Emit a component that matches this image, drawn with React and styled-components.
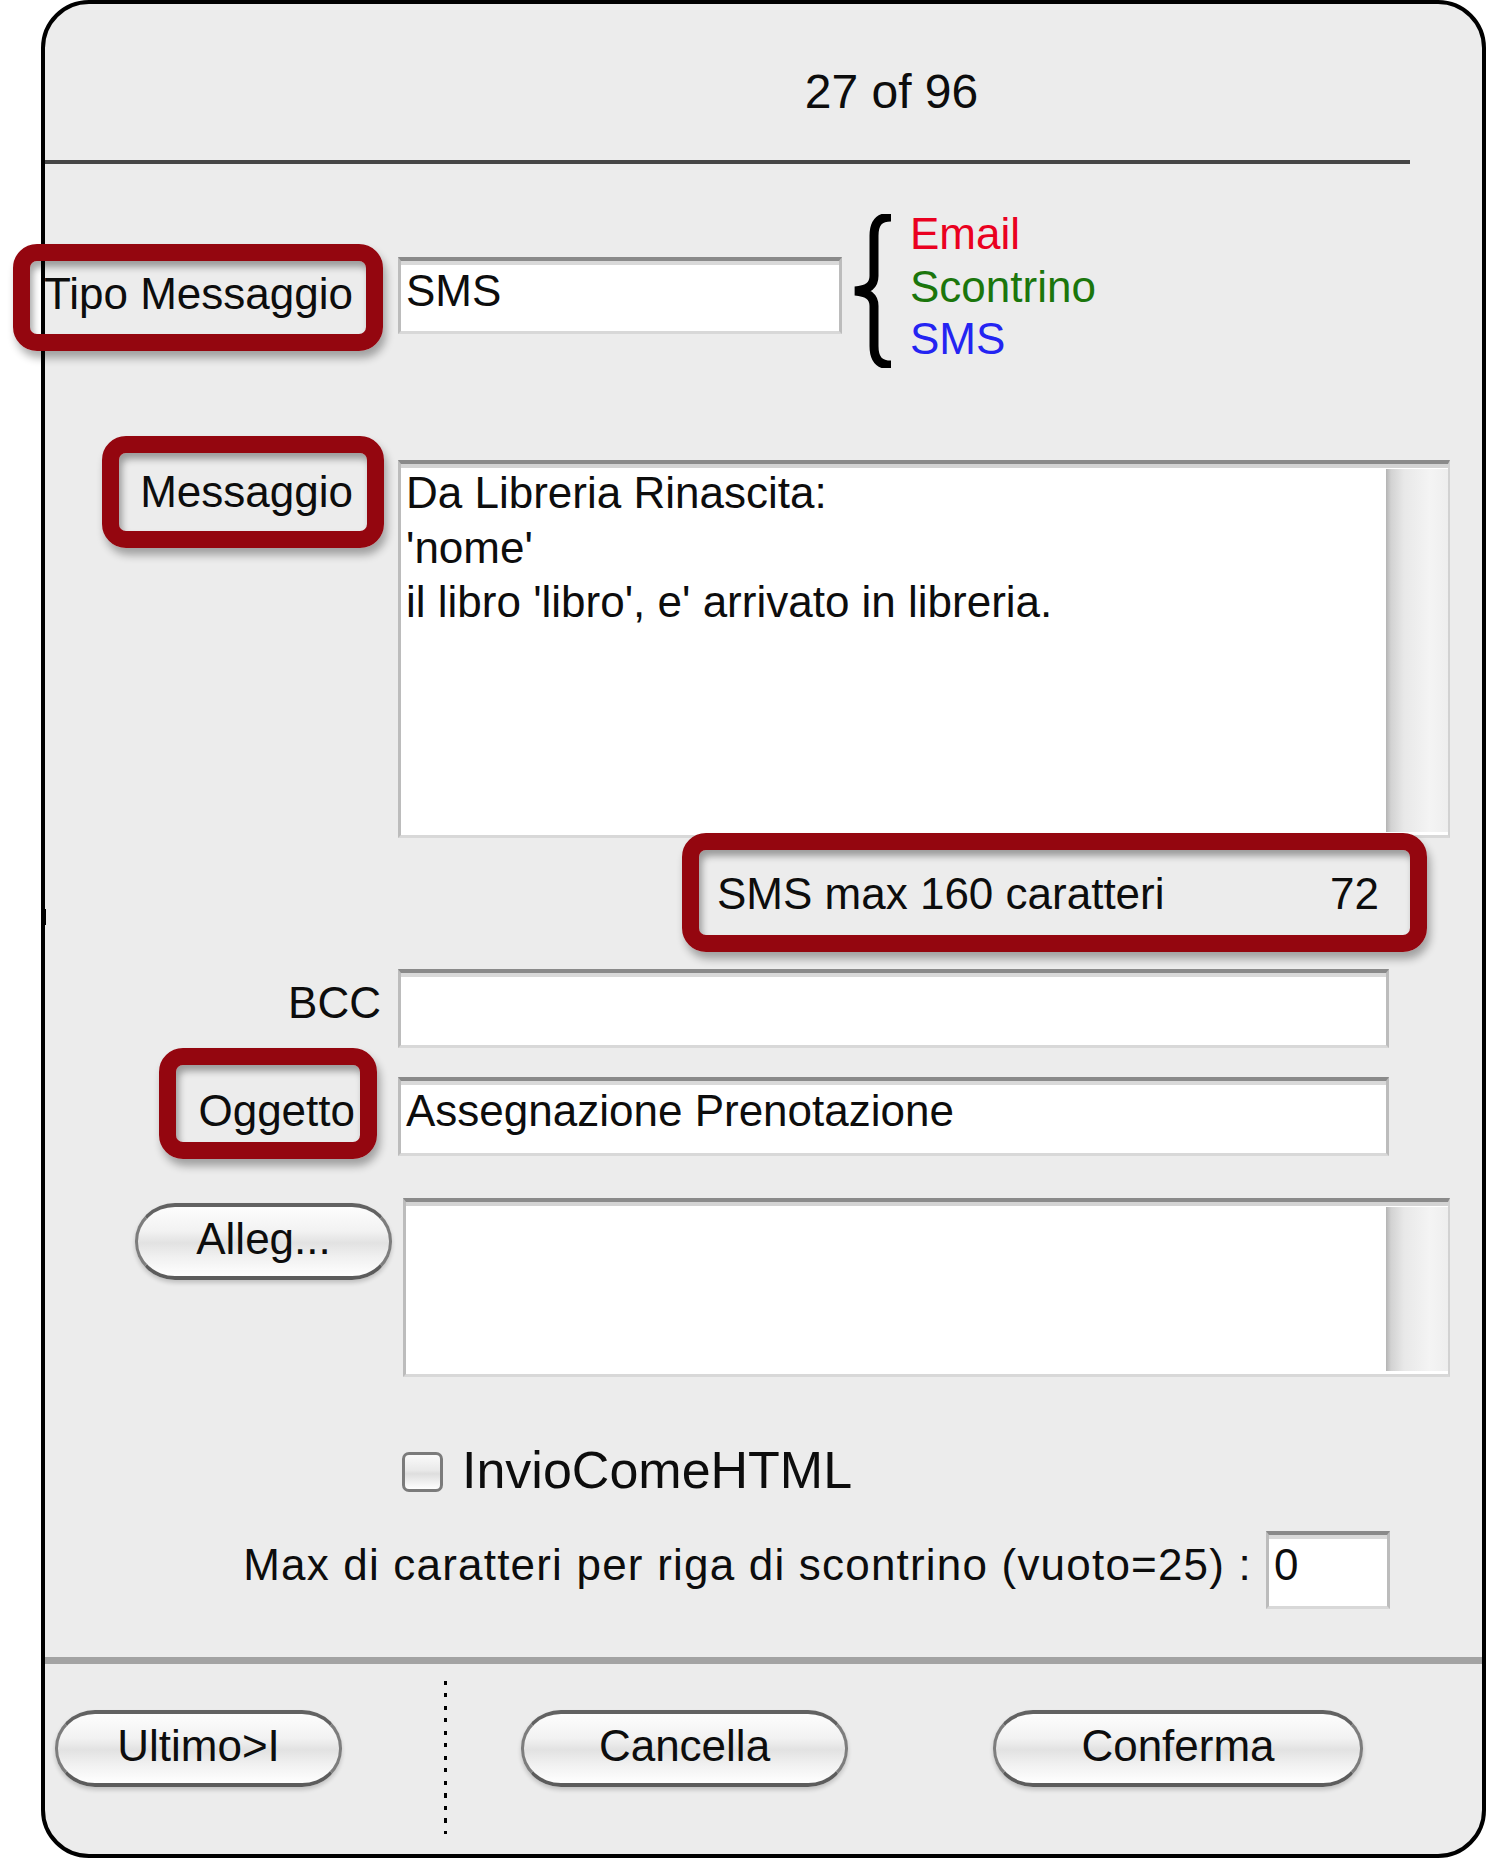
import React from 'react'
import styled, { createGlobalStyle } from 'styled-components'

const GlobalStyle = createGlobalStyle`
  html, body {
    margin: 0;
    padding: 0;
    background: #fff;
  }
  body {
    font-family: "Liberation Sans", Arial, sans-serif;
    color: #0d0d0d;
  }
`

// finestra con angoli arrotondati
const Panel = styled.div`
  box-sizing: border-box;
  width: 1445px;
  height: 1858px;
  margin-left: 41px;
  border: 4px solid #000;
  border-radius: 48px;
  background: #ececec;
  font-size: 44px;
  line-height: 52px;
  display: flex;
  flex-direction: column;
`
const Header = styled.div`
  padding: 62px 0 42px 256px;
  text-align: center;
  font-size: 48px;
  line-height: 52px;
`
const Divider = styled.div`
  height: 4px;
  background: #464646;
  margin-right: 72px;
`
const Row = styled.div`
  display: flex;
  align-items: flex-start;
  margin-top: ${(p) => p.$mt || 0}px;
`
const LabelCell = styled.div`
  box-sizing: border-box;
  flex: 0 0 353px;
  width: 353px;
  min-width: 0;
  display: flex;
  justify-content: flex-end;
  padding-right: ${(p) => p.$pr || 0}px;
  margin-top: ${(p) => p.$mt || 0}px;
  white-space: nowrap;
`
const Highlight = styled.div`
  flex-shrink: 0;
  box-sizing: border-box;
  width: ${(p) => p.$w}px;
  border: 17px solid #94060f;
  border-radius: 24px;
  padding: ${(p) => p.$pad};
  margin-left: ${(p) => p.$ml || 0};
  margin-right: ${(p) => p.$mr || 0}px;
  text-align: right;
  white-space: nowrap;
  box-shadow: 3px 7px 8px rgba(0, 0, 0, 0.32), inset 3px 6px 7px rgba(0, 0, 0, 0.35);
`
const Counter = styled(Highlight)`
  display: flex;
  justify-content: space-between;
`
const Field = styled.div`
  box-sizing: border-box;
  flex-shrink: 0;
  width: ${(p) => p.$w}px;
  height: ${(p) => p.$h}px;
  margin-top: ${(p) => p.$mt || 0}px;
  margin-left: ${(p) => p.$ml || 0}px;
  padding: 4px 5px 0;
  background: #fff;
  border-top: 4px solid #8a8a8a;
  border-left: 3px solid #bcbcbc;
  border-right: 3px solid #bcbcbc;
  border-bottom: 3px solid #d8d8d8;
  box-shadow: inset 0 4px 0 #d9d9d9;
  white-space: nowrap;
`
const TextBox = styled.div`
  box-sizing: border-box;
  flex-shrink: 0;
  display: flex;
  width: ${(p) => p.$w}px;
  height: ${(p) => p.$h}px;
  margin-top: ${(p) => p.$mt || 0}px;
  margin-left: ${(p) => p.$ml || 0}px;
  background: #fff;
  border-top: 4px solid #8a8a8a;
  border-left: 3px solid #bcbcbc;
  border-right: 2px solid #d2d2d2;
  border-bottom: 3px solid #d8d8d8;
  box-shadow: inset 0 4px 0 #d3d3d3;
`
const TextContent = styled.div`
  flex: 1;
  padding: 2px 5px 0;
  line-height: 54.5px;
  white-space: pre-line;
`
const ScrollTrack = styled.div`
  flex: 0 0 62px;
  margin: 5px 0 3px;
  background: linear-gradient(to right, #b3b3b3 0, #d2d2d2 5px, #e8e8e8 18px, #f4f4f4 44px, #eeeeee 100%);
`
const Brace = styled.svg`
  flex-shrink: 0;
  margin-left: 10px;
`
const Options = styled.div`
  margin-left: 18px;
  margin-top: -6px;
  line-height: 52.5px;
`
const Option = styled.div`
  color: ${(p) => p.$c};
`
const Tick = styled.span`
  flex-shrink: 0;
  width: 3px;
  height: 16px;
  margin: 76px 0 0 -2px;
  background: #000;
`
const Button = styled.div`
  box-sizing: border-box;
  flex-shrink: 0;
  width: ${(p) => p.$w}px;
  height: 77px;
  margin-top: ${(p) => p.$mt || 0}px;
  margin-left: ${(p) => p.$ml || 0}px;
  display: flex;
  align-items: center;
  justify-content: center;
  padding-bottom: 6px;
  border: 3px solid #7d7d7d;
  border-top: 4px solid #626262;
  border-bottom: 4px solid #5c5c5c;
  border-radius: 40px / 38px;
  background: linear-gradient(to bottom, #fdfdfd 0%, #f2f2f2 35%, #e2e2e2 52%, #f0f0f0 72%, #ffffff 100%);
  box-shadow: 0 3px 4px rgba(0, 0, 0, 0.18);
  white-space: nowrap;
`
const CheckRow = styled.div`
  display: flex;
  align-items: flex-start;
  margin: 63px 0 0 357px;
  font-size: 52px;
  line-height: 60px;
`
const CheckBox = styled.span`
  box-sizing: border-box;
  width: 41px;
  height: 40px;
  margin: 12px 19px 0 0;
  border: 3px solid #7b7b7b;
  border-radius: 7px;
  background: linear-gradient(to bottom, #fafafa 0%, #e9e9e9 45%, #dedede 55%, #ffffff 100%);
`
const MaxRow = styled.div`
  display: flex;
  justify-content: flex-end;
  align-items: flex-start;
  margin: 31px 92px 0 0;
`
const MaxLabel = styled.span`
  margin: 8px 14px 0 0;
  letter-spacing: 1.2px;
  white-space: nowrap;
`
const Separator = styled.div`
  height: 7px;
  margin-top: 48px;
  background: #a3a3a3;
`
const Footer = styled.div`
  display: flex;
  align-items: flex-start;
  padding-left: 10px;
`
const Dots = styled.div`
  flex-shrink: 0;
  width: 3px;
  height: 153px;
  margin: 17px 0 0 102px;
  background: repeating-linear-gradient(to bottom, #000 0 4px, transparent 4px 12.5px);
`

export default function App() {
  return (
    <>
      <GlobalStyle />
      <Panel>
        <Header>27 of 96</Header>
        <Divider />

        <Row $mt={50}>
          <LabelCell $pr={15} $mt={30}>
            <Highlight $w={370} $pad="7px 13px 14px 0">Tipo Messaggio</Highlight>
          </LabelCell>
          <Field $w={444} $h={77} $mt={43}>SMS</Field>
          <Brace width="40" height="154" viewBox="0 0 40 154">
            <path
              d="M39 3 C27 3 22 9 22 22 L22 62 C22 72 15 76 3 77 C15 78 22 82 22 92 L22 132 C22 145 27 151 39 151"
              fill="none"
              stroke="#000"
              strokeWidth="9"
            />
          </Brace>
          <Options>
            <Option $c="#ea0020">Email</Option>
            <Option $c="#1b760c">Scontrino</Option>
            <Option $c="#2424f2">SMS</Option>
          </Options>
        </Row>

        <Row $mt={68}>
          <LabelCell $pr={14}>
            <Highlight $w={282} $pad="13px 14px 13px 0">Messaggio</Highlight>
          </LabelCell>
          <TextBox $w={1052} $h={378} $mt={24}>
            <TextContent>
              {"Da Libreria Rinascita:\n'nome'\nil libro 'libro', e' arrivato in libreria."}
            </TextContent>
            <ScrollTrack />
          </TextBox>
        </Row>

        <Row $mt={-5}>
          <Tick />
          <Counter $w={745} $pad="18px 31px 15px 18px" $ml="auto" $mr={55}>
            <span>SMS max 160 caratteri</span>
            <span>72</span>
          </Counter>
        </Row>

        <Row $mt={17}>
          <LabelCell $pr={17} $mt={8}>BCC</LabelCell>
          <Field $w={991} $h={79} />
        </Row>

        <Row>
          <LabelCell $pr={21}>
            <Highlight $w={218} $pad="20px 5px 5px 0">Oggetto</Highlight>
          </LabelCell>
          <Field $w={991} $h={79} $mt={29}>Assegnazione Prenotazione</Field>
        </Row>

        <Row $mt={39}>
          <LabelCell $pr={6}>
            <Button $w={257} $mt={5}>Alleg...</Button>
          </LabelCell>
          <TextBox $w={1047} $h={179} $ml={5}>
            <TextContent />
            <ScrollTrack />
          </TextBox>
        </Row>

        <CheckRow>
          <CheckBox />
          <span>InvioComeHTML</span>
        </CheckRow>

        <MaxRow>
          <MaxLabel>Max di caratteri per riga di scontrino (vuoto=25) :</MaxLabel>
          <Field $w={124} $h={78}>0</Field>
        </MaxRow>

        <Separator />

        <Footer>
          <Button $w={287} $mt={46}>Ultimo&gt;I</Button>
          <Dots />
          <Button $w={327} $mt={46} $ml={74}>Cancella</Button>
          <Button $w={370} $mt={46} $ml={145}>Conferma</Button>
        </Footer>
      </Panel>
    </>
  )
}
